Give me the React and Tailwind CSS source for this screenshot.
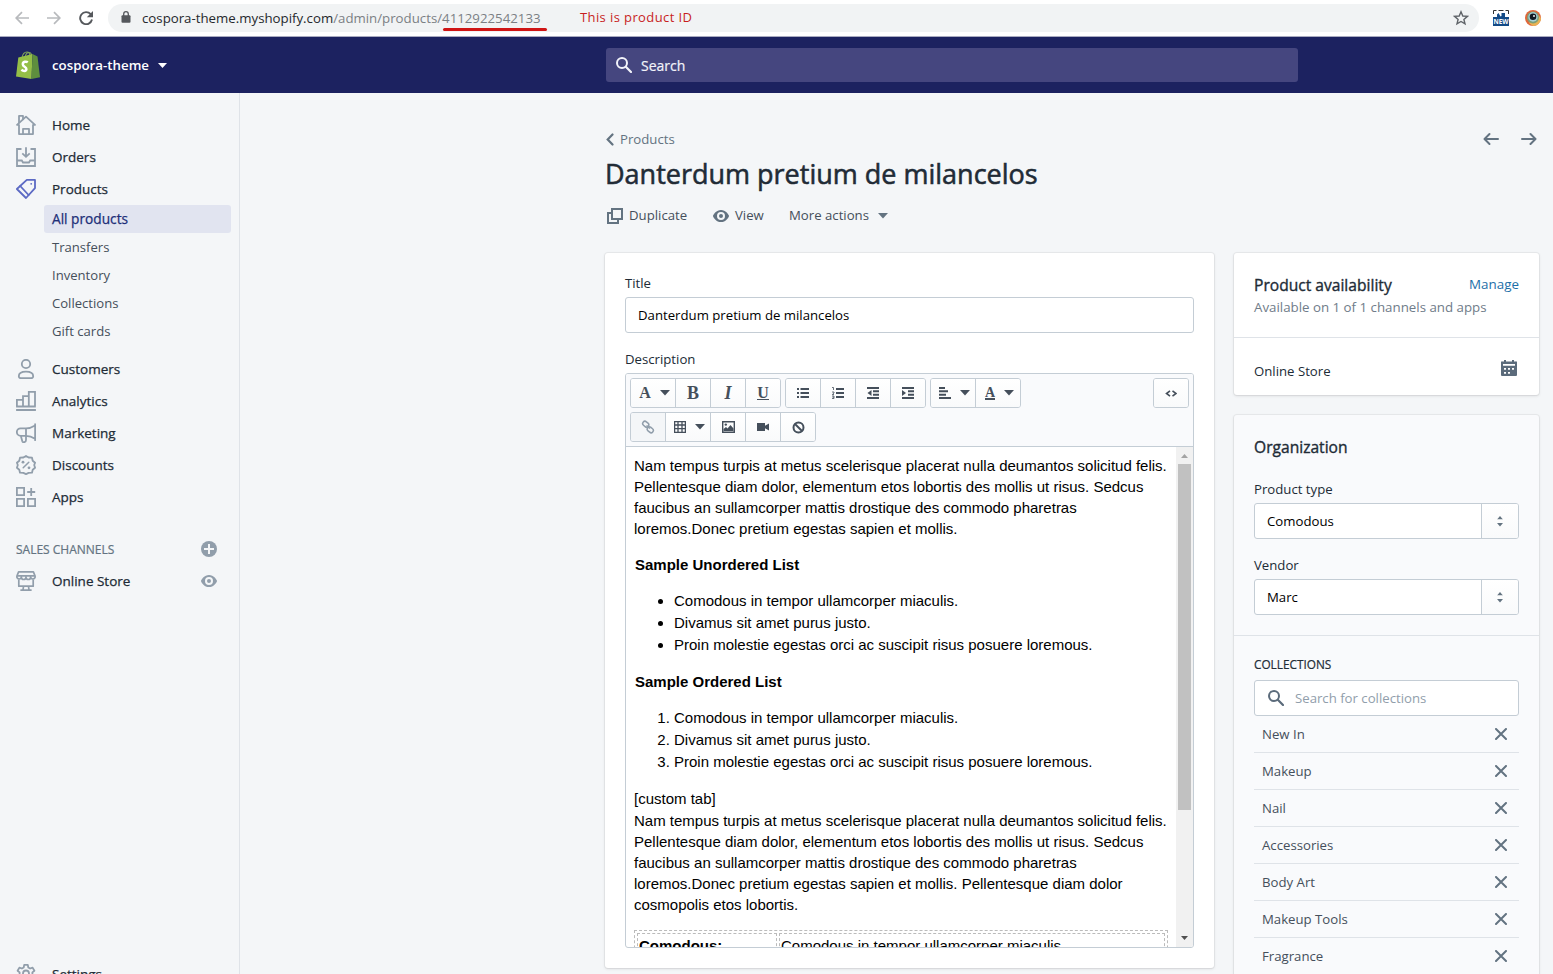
import React from "react";

const Svg = ({ children, className = "", size = 20, box = 20 }) => (
  <svg width={size} height={size} viewBox={`0 0 ${box} ${box}`} fill="none" className={`shrink-0 ${className}`}>
    {children}
  </svg>
);

const line = { stroke: "currentColor", strokeWidth: 1.8, strokeLinejoin: "round", strokeLinecap: "round" };

const icons = {
  home: (
    <g {...line}>
      <path d="M1 9.800 10 1.600l9 8.200h-2V19.100H3V9.800z" />
      <path d="M3 7.600V.9h4v3.400M7 19v-5.200h6V19" />
    </g>
  ),
  orders: (
    <g {...line} strokeLinecap="butt" strokeLinejoin="miter">
      <path d="M5.500 2H1v17h18V2h-4.500M1 13.500h4.800l1.200 2h6l1.200-2H19M10 .2v9.300M6.300 6.300l3.700 3.500 3.700-3.500" />
    </g>
  ),
  products: (
    <g {...line}>
      <path d="M10.800.9H19v8.200l-9 9.900L.9 10z" />
      <path d="M4.200 7 12.600 16" />
      <circle cx="15.200" cy="4.800" r=".9" fill="currentColor" stroke="none" />
    </g>
  ),
  customers: (
    <g {...line}>
      <circle cx="10" cy="5" r="4.200" />
      <path d="M2.800 17.300c0-3 3.200-4.600 7.200-4.600s7.200 1.600 7.200 4.600c0 1.300-.8 1.900-2 1.900H4.800c-1.200 0-2-.6-2-1.900z" />
    </g>
  ),
  analytics: (
    <g {...line} strokeLinejoin="miter" strokeLinecap="butt">
      <path d="M.9 15.500V8.900H7v6.600M7 15.500V5.200h5.800v10.300M12.800 15.500V.9H19v14.600M.1 15.500h19.700M.1 19h19.800" />
    </g>
  ),
  marketing: (
    <g {...line}>
      <path d="M19.100 1.200v16M19.100 2.400c-3 1.900-5.500 2.900-9 2.900H4.600a3.700 3.700 0 0 0 0 7.500h5.500c3.500 0 6 1 9 2.900M10 5.300v7.500M4.800 12.800l1.500 5.400c.3.800 1 1.200 1.900 1 1.200-.2 1.800-1 1.800-2.200v-4" />
    </g>
  ),
  discounts: (
    <g {...line}>
      <path d="M10 .9 12.600 2.500l3.400.2.700 3 2.400 2L18.200 10l.9 2.700-2.400 2-.7 3-3.400.2L10 19.100l-2.600-1.200-3.400-.2-.7-3-2.400-2L1.800 10l-.9-2.300 2.400-2 .7-3 3.400-.2z" />
      <path d="M7.200 12.800l5.600-5.600" strokeWidth="1.500" />
      <circle cx="7" cy="7.200" r="1.400" fill="currentColor" stroke="none" />
      <circle cx="13" cy="12.800" r="1.400" fill="currentColor" stroke="none" />
    </g>
  ),
  apps: (
    <g {...line} strokeLinejoin="miter" strokeLinecap="butt">
      <path d="M.9.900h7.200v7.200H.9zM.9 11.900h7.200v7.200H.9zM11.900 11.900h7.200v7.200h-7.200zM15.200 1v8M11.200 5h8" />
    </g>
  ),
  store: (
    <g {...line} strokeWidth="1.700">
      <path d="M2.600.9h14.800L19.100 5v1.200a2.300 2.300 0 0 1-4.500 0 2.300 2.300 0 0 1-4.600 0 2.300 2.300 0 0 1-4.600 0 2.300 2.300 0 0 1-4.500 0V5zM1 4.900h18M2.800 9v6.200h14.400V9M7.500 15.500l-.5 3.400M12.500 15.500l.5 3.400M5 19.100h10" />
    </g>
  ),
  settings: (
    <g {...line}>
      <path d="M8.200.9h3.600l.5 2.600 1.800 1 2.500-.9 1.800 3.100-2 1.700v2.200l2 1.700-1.800 3.100-2.500-.9-1.800 1-.5 2.600H8.200l-.5-2.600-1.800-1-2.500.9-1.800-3.100 2-1.700V8.400l-2-1.700 1.800-3.100 2.500.9 1.800-1z" />
      <circle cx="10" cy="9.500" r="3" />
    </g>
  ),
};

const Eye = ({ className }) => (
  <Svg size={16} box={16} className={className}>
    <path
      fill="currentColor"
      fillRule="evenodd"
      d="M8 2C3.300 2 .6 6.300.1 7.600a1 1 0 0 0 0 .8C.6 9.700 3.300 14 8 14s7.400-4.300 7.900-5.600a1 1 0 0 0 0-.8C15.400 6.300 12.700 2 8 2zm0 10a4 4 0 1 1 0-8 4 4 0 0 1 0 8zm0-6a2 2 0 1 0 0 4 2 2 0 0 0 0-4z"
    />
  </Svg>
);

const Caret = ({ className = "", w = 9 }) => (
  <svg width={w} height={w / 2 + 0.5} viewBox="0 0 10 5.500" className={`shrink-0 ${className}`}>
    <path d="M0 0h10L5 5.500z" fill="currentColor" />
  </svg>
);

const Magnifier = ({ className }) => (
  <Svg size={16} box={16} className={className}>
    <circle cx="6" cy="6" r="5" stroke="currentColor" strokeWidth="2" />
    <path d="M9.800 9.800 15 15" stroke="currentColor" strokeWidth="2.200" strokeLinecap="round" />
  </Svg>
);

const BrowserBar = () => (
  <div className="flex h-[37px] shrink-0 items-start border-b border-[#a9abc0] bg-white pt-1">
    <div className="flex h-7 w-[108px] shrink-0 items-center gap-[18px] pl-[15px] text-[#b8babd]">
      <Svg size={14} box={14}>
        <path d="M14 7H1.500M7 1.200 1.200 7 7 12.800" stroke="currentColor" strokeWidth="1.700" />
      </Svg>
      <Svg size={14} box={14}>
        <path d="M0 7h12.500M7 1.200 12.800 7 7 12.800" stroke="currentColor" strokeWidth="1.700" />
      </Svg>
      <Svg size={14} box={14} className="text-[#55585c]">
        <path d="M11.700 3.200A6 6 0 1 0 13 8.500" stroke="currentColor" strokeWidth="1.900" />
        <path d="M14 0v6.200H7.800z" fill="currentColor" />
      </Svg>
    </div>
    <div className="flex h-7 w-[1371px] items-center rounded-full bg-[#f1f3f4] pl-[13px] pr-[10px]">
      <svg width="10" height="12" viewBox="0 0 10 12" className="mb-[2px] shrink-0 text-[#55585c]">
        <rect x=".5" y="4.200" width="9" height="7.500" rx="1" fill="currentColor" />
        <path d="M2.700 5V3a2.300 2.300 0 0 1 4.600 0v2" fill="none" stroke="currentColor" strokeWidth="1.300" />
      </svg>
      <div className="ml-[11px] flex w-[399px] whitespace-nowrap text-[13.250px] leading-7 text-[#25282c]">
        <span>cospora-theme.myshopify.com</span>
        <span className="text-[#7b7f84]">/admin/products/</span>
        <span className="relative text-[#7b7f84]">
          4112922542133
          <span className="absolute left-px top-6 h-[3px] w-[104px] rounded-full bg-[#cf1515]" />
        </span>
      </div>
      <span className="ml-[39px] whitespace-nowrap text-[13px] tracking-[0.400px] text-[#c81e1e]">This is product ID</span>
      <Svg size={16} box={16} className="ml-auto text-[#5f6368]">
        <path d="m8 1.800 1.800 4.200 4.600.4-3.500 3 1.100 4.500L8 11.500l-4 2.400 1.100-4.500-3.500-3 4.600-.4z" stroke="currentColor" strokeWidth="1.400" />
      </Svg>
    </div>
    <svg width="16" height="16" viewBox="0 0 16 16" className="ml-[14px] mt-[6px] shrink-0">
      <path d="M0 7h4V4.500L5.500 3l2 3.500 1-.5V3H12v4h4v9H0z" fill="#134a86" />
      <path d="M.5 4V.5h3M5.500.5h5M12.500.5h3V4" fill="none" stroke="#333" />
      <text x="8" y="14.200" textAnchor="middle" fontSize="7.500" fontWeight="700" fill="#fff" textLength="15" lengthAdjust="spacingAndGlyphs">NEW</text>
    </svg>
    <svg width="16" height="16" viewBox="0 0 16 16" className="ml-4 mt-[6px] shrink-0">
      <circle cx="8" cy="8" r="8" fill="#e0673a" />
      <path d="M8 16a8 8 0 0 0 8-8l-4-4-8 9z" fill="#e9b455" />
      <circle cx="8" cy="7.500" r="6" fill="#7d9f78" />
      <circle cx="8" cy="7" r="4.700" fill="#a7d0d8" />
      <circle cx="8" cy="6.800" r="3.300" fill="#101820" />
      <circle cx="9" cy="6" r="1" fill="#e8eef0" />
    </svg>
  </div>
);

const TopBar = () => (
  <header className="flex h-14 shrink-0 items-center bg-[#1c2260] text-white">
    <div className="flex w-[606px] items-center pl-4">
      <svg width="24" height="28" viewBox="0 0 24 28" className="shrink-0">
        <path d="M6 7c.5-3.500 2.500-6 5-6 2 0 3 2 3 5M9 6.500c.5-3 2-5 4-5S15.500 3.500 15.500 5" fill="none" stroke="#7fa35a" strokeWidth="1.100" />
        <path d="M2.300 6.500 16.500 3l-1 25L0 25.500z" fill="#95bf47" />
        <path d="m16.500 3 5 2.500L24 26.300 15.500 28z" fill="#5e8e3e" />
        <path d="M11.800 11.300c-1.400-1-5-.9-5 1.900 0 2.600 3.800 2.500 3.600 5-.2 2.300-3.200 2.100-5 .6" fill="none" stroke="#fff" strokeWidth="2.500" />
      </svg>
      <span className="ml-3 pt-[2px] text-[13.300px] font-semibold">cospora-theme</span>
      <Caret className="ml-[9px]" />
    </div>
    <div className="flex h-[34px] w-[692px] items-center rounded-[3px] bg-[#45467f] pl-[10px] text-[#f2f3fa]">
      <Magnifier />
      <span className="ml-[9px] text-[14px] [-webkit-text-stroke:0.200px]">Search</span>
    </div>
  </header>
);

const medium = "[-webkit-text-stroke:0.250px_currentColor]";

const NavItem = ({ icon, label, tone = "text-[#919eab]", children }) => (
  <div className="flex h-8 items-center pl-4 pr-[22px]">
    <Svg className={tone}>{icons[icon]}</Svg>
    <span className={`ml-4 text-[13.500px] text-[#212b36] ${medium}`}>{label}</span>
    {children}
  </div>
);

const Sidebar = () => (
  <nav className="flex w-60 shrink-0 flex-col border-r border-[#dfe3e8] pt-4">
    <NavItem icon="home" label="Home" />
    <NavItem icon="orders" label="Orders" />
    <NavItem icon="products" label="Products" tone="text-[#5c6ac4]" />
    <div className="mb-2 ml-11 mr-2 text-[13.100px] leading-7 text-[#454f5b]">
      <div className={`h-7 rounded-[3px] bg-[#e1e4f0] pl-2 text-[13.700px] text-[#202e78] ${medium}`}>All products</div>
      {["Transfers", "Inventory", "Collections", "Gift cards"].map((t) => (
        <div key={t} className="h-7 pl-2">{t}</div>
      ))}
    </div>
    <NavItem icon="customers" label="Customers" />
    <NavItem icon="analytics" label="Analytics" />
    <NavItem icon="marketing" label="Marketing" />
    <NavItem icon="discounts" label="Discounts" />
    <NavItem icon="apps" label="Apps" />
    <div className="mt-5 flex h-8 items-center justify-between pl-4 pr-[22px]">
      <span className="pt-[2px] text-[12px] text-[#637381] [-webkit-text-stroke:0.200px]">SALES CHANNELS</span>
      <Svg size={16} box={16} className="text-[#919eab]">
        <circle cx="8" cy="8" r="8" fill="currentColor" />
        <path d="M8 3v10M3 8h10" stroke="#f4f6f8" strokeWidth="2" />
      </Svg>
    </div>
    <NavItem icon="store" label="Online Store">
      <Eye className="ml-auto text-[#919eab]" />
    </NavItem>
    <div className="-mb-[16px] mt-auto">
      <NavItem icon="settings" label="Settings" />
    </div>
  </nav>
);

const Arrow = ({ flip }) => (
  <Svg size={16} box={16} className={flip ? "rotate-180" : ""}>
    <path d="M15 8H2M6.500 3 1.500 8l5 5" stroke="currentColor" strokeWidth="2" strokeLinecap="round" strokeLinejoin="round" />
  </Svg>
);

const PageHeader = () => (
  <div className="flex h-[160px] flex-col">
    <div className="mt-9 flex h-5 items-center text-[#637381]">
      <svg width="8" height="13" viewBox="0 0 8 13" className="ml-[1px]">
        <path d="M6.500 1.500 1.700 6.500l4.800 5" fill="none" stroke="currentColor" strokeWidth="2.200" strokeLinecap="round" />
      </svg>
      <span className="ml-[6px] pt-px text-[13.200px]">Products</span>
      <div className="ml-auto mr-[2px] flex gap-[22px]">
        <Arrow />
        <Arrow flip />
      </div>
    </div>
    <h1 className="mt-[7px] h-9 whitespace-nowrap text-[27px] leading-9 text-[#212b36] [-webkit-text-stroke:0.550px_currentColor]">Danterdum pretium de milancelos</h1>
    <div className="mt-3 flex h-6 items-center whitespace-nowrap text-[13.200px] text-[#454f5b]">
      <Svg size={16} box={16} className="ml-[2px] text-[#637381]">
        <path d="M5 1h10v10H5zM5 5H1v10h10v-4" stroke="currentColor" strokeWidth="2" />
      </Svg>
      <span className="ml-[6px] w-[78px]">Duplicate</span>
      <Eye className="ml-[6px] text-[#637381]" />
      <span className="ml-[6px] w-[54px]">View</span>
      <span className="w-[89px]">More actions</span>
      <Caret className="text-[#637381]" w={10} />
    </div>
  </div>
);

const Tool = ({ w = "w-[35px]", children, caret, muted }) => (
  <div className={`flex h-full items-center justify-center border-r border-[#c4cdd5] last:border-r-0 ${w} ${caret ? "pl-[3px]" : ""} ${muted ? "bg-[#f4f6f8]" : "bg-gradient-to-b from-white to-[#f9fafb]"}`}>
    {children}
    {caret && <Caret className="ml-[9px]" w={10} />}
  </div>
);

const ToolGroup = ({ children }) => (
  <div className="flex h-[30px] overflow-hidden rounded-[3px] border border-[#c4cdd5] text-[#454f5b]">{children}</div>
);

const Glyph = ({ d, w = 14, h = 14, sw = 2 }) => (
  <svg width={w} height={h} viewBox={`0 0 ${w} ${h}`} className="shrink-0">
    <path d={d} fill="none" stroke="currentColor" strokeWidth={sw} />
  </svg>
);

const serif = "font-['Liberation_Serif',serif]";

const Toolbar = () => (
  <div className="flex h-[73px] flex-col gap-1 border-b border-[#c4cdd5] bg-[#f9fafc] px-1 pt-1">
    <div className="flex gap-1">
      <ToolGroup>
        <Tool w="w-[45px]" caret><span className={`text-[16px] font-bold ${serif}`}>A</span></Tool>
        <Tool><span className={`text-[18px] font-bold ${serif}`}>B</span></Tool>
        <Tool><span className={`text-[18px] font-bold italic ${serif}`}>I</span></Tool>
        <Tool w="w-[34px]"><span className={`border-b border-current text-[16px] font-bold leading-[12px] ${serif}`}>U</span></Tool>
      </ToolGroup>
      <ToolGroup>
        <Tool><Glyph w={12} h={12} d="M0 2h2M0 6h2M0 10h2M3.500 2H12M3.500 6H12M3.500 10H12" /></Tool>
        <Tool>
          <svg width="12" height="12" viewBox="0 0 12 12">
            <path d="M4 2h8M4 6h8M4 10h8" stroke="currentColor" strokeWidth="2" />
            <path d="M0 .5h1.500V3M0 5h2v1L.3 7.500H2M0 9h2v2.500H0M.5 10.200H2" stroke="currentColor" strokeWidth=".8" fill="none" />
          </svg>
        </Tool>
        <Tool>
          <svg width="12" height="12" viewBox="0 0 12 12">
            <path d="M0 1h12M6 4.300h6M6 7.700h6M0 11h12" stroke="currentColor" strokeWidth="2" />
            <path d="M4.500 3v6L.5 6z" fill="currentColor" />
          </svg>
        </Tool>
        <Tool w="w-[34px]">
          <svg width="12" height="12" viewBox="0 0 12 12">
            <path d="M0 1h12M6 4.300h6M6 7.700h6M0 11h12" stroke="currentColor" strokeWidth="2" />
            <path d="M0 3v6l4-3z" fill="currentColor" />
          </svg>
        </Tool>
      </ToolGroup>
      <ToolGroup>
        <Tool w="w-[45px]" caret><Glyph w={12} h={12} d="M0 1h6M0 4.300h9M0 7.700h7M0 11h12" /></Tool>
        <Tool w="w-[44px]" caret><span className={`border-b-2 border-current text-[14px] font-bold leading-[11px] ${serif}`}>A</span></Tool>
      </ToolGroup>
      <div className="ml-auto">
        <ToolGroup>
          <Tool w="w-[34px]"><Glyph w={12} h={7} sw={1.600} d="M5 .8 1.500 3.500 5 6.200M7.500.8 11 3.500 7.500 6.200" /></Tool>
        </ToolGroup>
      </div>
    </div>
    <div className="flex">
      <ToolGroup>
        <Tool muted>
          <svg width="14" height="14" viewBox="0 0 14 14" className="text-[#919eab]">
            <g fill="none" stroke="currentColor" strokeWidth="1.500">
              <rect x="1.500" y="2" width="6.500" height="4.500" rx="2.200" transform="rotate(40 4.800 4.200)" />
              <rect x="6" y="7.500" width="6.500" height="4.500" rx="2.200" transform="rotate(40 9.200 9.800)" />
              <path d="m5.500 5.500 3.500 3" />
            </g>
          </svg>
        </Tool>
        <Tool w="w-[45px]" caret>
          <Glyph w={12} h={12} sw={1.300} d="M.6.6h10.800v10.800H.6zM0 4h12M0 7.700h12M4 0v12M8 0v12" />
        </Tool>
        <Tool>
          <svg width="13" height="12" viewBox="0 0 13 12">
            <path d="M.7.7h11.600v10.600H.7z" fill="none" stroke="currentColor" strokeWidth="1.400" />
            <path d="M1.500 10V8l2.500-2 1.500 1.500L8.500 4l3 3.500V10z" fill="currentColor" />
            <circle cx="3.800" cy="3.600" r="1.200" fill="currentColor" />
          </svg>
        </Tool>
        <Tool>
          <svg width="12" height="10" viewBox="0 0 12 10">
            <path d="M0 1h8v2.800L12 1.500v7L8 6.200V9H0z" fill="currentColor" />
          </svg>
        </Tool>
        <Tool w="w-[34px]">
          <svg width="13" height="13" viewBox="0 0 13 13">
            <circle cx="6.500" cy="6.500" r="5" fill="none" stroke="currentColor" strokeWidth="2" />
            <path d="m3 3 7 7" stroke="currentColor" strokeWidth="2" />
          </svg>
        </Tool>
      </ToolGroup>
    </div>
  </div>
);

const items = [
  "Comodous in tempor ullamcorper miaculis.",
  "Divamus sit amet purus justo.",
  "Proin molestie egestas orci ac suscipit risus posuere loremous.",
];

const Paragraph = ({ rows }) => rows.map((r) => <div key={r} className="h-[21px]">{r}</div>);

const intro = [
  "Nam tempus turpis at metus scelerisque placerat nulla deumantos solicitud felis.",
  "Pellentesque diam dolor, elementum etos lobortis des mollis ut risus. Sedcus",
  "faucibus an sullamcorper mattis drostique des commodo pharetras",
];

const Editor = () => (
  <div className="flex h-[575px] flex-col overflow-hidden rounded-[3px] border border-[#c4cdd5]">
    <Toolbar />
    <div className="flex min-h-0 flex-1">
      <div className="min-w-0 flex-1 overflow-hidden whitespace-nowrap pl-2 pt-2 font-['Liberation_Sans',Arial,sans-serif] text-[15px] leading-[21px] text-black">
        <Paragraph rows={[...intro, "loremos.Donec pretium egestas sapien et mollis."]} />
        <div className="mt-[15px] pl-px font-bold">Sample Unordered List</div>
        <ul className="mt-[15px] list-disc pl-10 leading-[22px]">
          {items.map((t) => <li key={t}>{t}</li>)}
        </ul>
        <div className="mt-[15px] pl-px font-bold">Sample Ordered List</div>
        <ol className="mt-[15px] list-decimal pl-10 leading-[22px]">
          {items.map((t) => <li key={t}>{t}</li>)}
        </ol>
        <div className="mt-[15px] h-[22px]">[custom tab]</div>
        <Paragraph rows={[...intro, "loremos.Donec pretium egestas sapien et mollis. Pellentesque diam dolor", "cosmopolis etos lobortis."]} />
        <div className="mt-[15px] flex h-20 w-[534px] gap-[2px] border border-dashed border-[#bbb] p-[2px]">
          <div className="w-[140px] border border-dashed border-[#bbb] pl-px pt-px font-bold">Comodous:</div>
          <div className="flex-1 border border-dashed border-[#bbb] pl-px pt-px">Comodous in tempor ullamcorper miaculis</div>
        </div>
      </div>
      <div className="flex w-[17px] flex-col items-center justify-between bg-[#f1f1f1]">
        <Caret className="mt-[7px] rotate-180 text-[#a3a3a3]" w={7} />
        <div className="mb-auto mt-[6px] h-[346px] w-[13px] bg-[#c1c1c1]" />
        <Caret className="mb-[7px] text-[#505050]" w={7} />
      </div>
    </div>
  </div>
);

const card = "rounded-[3px] shadow-[0_0_0_1px_rgba(63,63,68,0.06),0_1px_3px_0_rgba(63,63,68,0.15)]";
const label = "h-5 text-[13.200px] leading-5 text-[#212b36]";

const Select = ({ value }) => (
  <div className="mt-1 flex h-9 overflow-hidden rounded-[3px] border border-[#c4cdd5] bg-white">
    <div className="flex-1 pl-3 text-[13.200px] leading-[34px] text-black">{value}</div>
    <div className="flex w-[37px] flex-col items-center justify-center gap-1 border-l border-[#c4cdd5] bg-gradient-to-b from-white to-[#f9fafb] text-[#637381]">
      <Caret className="rotate-180" w={6} />
      <Caret w={6} />
    </div>
  </div>
);

const RightColumn = () => (
  <div className="flex w-[305px] flex-col gap-5">
    <section className={`h-[142px] bg-white ${card}`}>
      <div className="h-[85px] border-b border-[#dfe3e8] px-5 pt-[21px]">
        <div className="flex h-[22px] justify-between">
          <h2 className="text-[15.600px] leading-[22px] text-[#212b36] [-webkit-text-stroke:0.350px_currentColor]">Product availability</h2>
          <a className="text-[13.400px] leading-5 text-[#1d6fa8]">Manage</a>
        </div>
        <p className="whitespace-nowrap text-[13.300px] leading-[22px] text-[#6f7c89]">Available on 1 of 1 channels and apps</p>
      </div>
      <div className="flex h-[57px] items-center justify-between pl-5 pr-[22px] pt-[10px]">
        <span className="text-[13.200px] text-[#212b36]">Online Store</span>
        <Svg size={16} box={16} className="mb-[7px] text-[#5b6b7b]">
          <path d="M1.500 1.500H3V0h2v1.500h6V0h2v1.500h1.500a1 1 0 0 1 1.500 1V15a1 1 0 0 1-1 1H1a1 1 0 0 1-1-1V2.500a1 1 0 0 1 1.500-1z" fill="currentColor" />
          <path d="M2 4.900h12M3 8.800h2M7 8.800h2M11 8.800h2M3 12.800h2M7 12.800h2" stroke="#fff" strokeWidth="1.800" />
        </Svg>
      </div>
    </section>
    <section className={`h-[620px] bg-[#f9fafc] ${card}`}>
      <div className="h-[221px] border-b border-[#dfe3e8] px-5 pt-[21px]">
        <h2 className="h-[22px] text-[15.600px] leading-[22px] text-[#212b36] [-webkit-text-stroke:0.350px_currentColor]">Organization</h2>
        <div className={`mt-[21px] ${label}`}>Product type</div>
        <Select value="Comodous" />
        <div className={`mt-4 ${label}`}>Vendor</div>
        <Select value="Marc" />
      </div>
      <div className="px-5 pt-[18px]">
        <h3 className="h-5 text-[11.800px] leading-5 text-[#212b36] [-webkit-text-stroke:0.200px]">COLLECTIONS</h3>
        <div className="mt-[6px] flex h-9 items-center rounded-[3px] border border-[#c4cdd5] bg-white pl-[13px]">
          <Magnifier className="text-[#5b6b7b]" />
          <span className="ml-[11px] pt-px text-[13.200px] text-[#919eab]">Search for collections</span>
        </div>
        {["New In", "Makeup", "Nail", "Accessories", "Body Art", "Makeup Tools", "Fragrance"].map((t) => (
          <div key={t} className="flex h-[37px] items-center justify-between border-b border-[#dfe3e8] pl-2 pr-3 text-[13.200px] text-[#454f5b]">
            <span className="pt-px">{t}</span>
            <Svg size={12} box={12} className="text-[#637381]">
              <path d="m1 1 10 10M11 1 1 11" stroke="currentColor" strokeWidth="2" strokeLinecap="round" />
            </Svg>
          </div>
        ))}
      </div>
    </section>
  </div>
);

export default function App() {
  return (
    <div className="flex h-[974px] w-[1553px] flex-col overflow-hidden bg-[#f4f6f8] font-['Open_Sans','Noto_Sans',sans-serif] text-[#212b36]">
      <BrowserBar />
      <TopBar />
      <div className="flex min-h-0 flex-1">
        <Sidebar />
        <main className="ml-[365px] w-[934px]">
          <PageHeader />
          <div className="flex gap-5">
            <section className={`h-[715px] w-[609px] bg-white px-5 pt-5 ${card}`}>
              <div className={label}>Title</div>
              <div className="mt-1 h-9 rounded-[3px] border border-[#c4cdd5] pl-3 text-[13.200px] leading-[34px] text-black">Danterdum pretium de milancelos</div>
              <div className={`mb-1 mt-4 ${label}`}>Description</div>
              <Editor />
            </section>
            <RightColumn />
          </div>
        </main>
      </div>
    </div>
  );
}
